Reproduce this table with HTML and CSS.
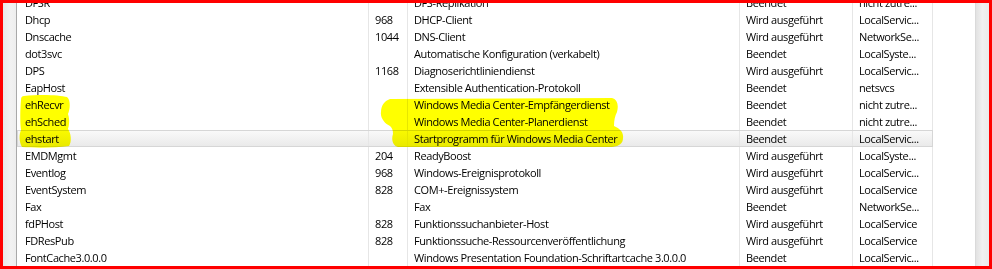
FILE: index.html
```html
<!DOCTYPE html>
<html lang="de">
<head>
<meta charset="utf-8">
<title>Dienste</title>
<link rel="stylesheet" href="styles.css">
</head>
<body>
<div class="frame">
  <div class="window">
    <div class="gutter"></div>
    <div class="list">
      <div class="rows">
        <div class="row"><div class="c name">DFSR</div><div class="c pid"></div><div class="c desc">DFS-Replikation</div><div class="c status">Beendet</div><div class="c group">nicht zutre...</div></div>
        <div class="row"><div class="c name">Dhcp</div><div class="c pid">968</div><div class="c desc">DHCP-Client</div><div class="c status">Wird ausgeführt</div><div class="c group">LocalServic...</div></div>
        <div class="row"><div class="c name">Dnscache</div><div class="c pid">1044</div><div class="c desc">DNS-Client</div><div class="c status">Wird ausgeführt</div><div class="c group">NetworkSe...</div></div>
        <div class="row"><div class="c name">dot3svc</div><div class="c pid"></div><div class="c desc">Automatische Konfiguration (verkabelt)</div><div class="c status">Beendet</div><div class="c group">LocalSyste...</div></div>
        <div class="row"><div class="c name">DPS</div><div class="c pid">1168</div><div class="c desc">Diagnoserichtliniendienst</div><div class="c status">Wird ausgeführt</div><div class="c group">LocalServic...</div></div>
        <div class="row"><div class="c name">EapHost</div><div class="c pid"></div><div class="c desc">Extensible Authentication-Protokoll</div><div class="c status">Beendet</div><div class="c group">netsvcs</div></div>
        <div class="row"><div class="c name">ehRecvr</div><div class="c pid"></div><div class="c desc">Windows Media Center-Empfängerdienst</div><div class="c status">Beendet</div><div class="c group">nicht zutre...</div></div>
        <div class="row"><div class="c name">ehSched</div><div class="c pid"></div><div class="c desc">Windows Media Center-Planerdienst</div><div class="c status">Beendet</div><div class="c group">nicht zutre...</div></div>
        <div class="row selected"><div class="c name">ehstart</div><div class="c pid"></div><div class="c desc">Startprogramm für Windows Media Center</div><div class="c status">Beendet</div><div class="c group">LocalServic...</div></div>
        <div class="row"><div class="c name">EMDMgmt</div><div class="c pid">204</div><div class="c desc">ReadyBoost</div><div class="c status">Wird ausgeführt</div><div class="c group">LocalSyste...</div></div>
        <div class="row"><div class="c name">Eventlog</div><div class="c pid">968</div><div class="c desc">Windows-Ereignisprotokoll</div><div class="c status">Wird ausgeführt</div><div class="c group">LocalServic...</div></div>
        <div class="row"><div class="c name">EventSystem</div><div class="c pid">828</div><div class="c desc">COM+-Ereignissystem</div><div class="c status">Wird ausgeführt</div><div class="c group">LocalService</div></div>
        <div class="row"><div class="c name">Fax</div><div class="c pid"></div><div class="c desc">Fax</div><div class="c status">Beendet</div><div class="c group">NetworkSe...</div></div>
        <div class="row"><div class="c name">fdPHost</div><div class="c pid">828</div><div class="c desc">Funktionssuchanbieter-Host</div><div class="c status">Wird ausgeführt</div><div class="c group">LocalService</div></div>
        <div class="row"><div class="c name">FDResPub</div><div class="c pid">828</div><div class="c desc">Funktionssuche-Ressourcenveröffentlichung</div><div class="c status">Wird ausgeführt</div><div class="c group">LocalService</div></div>
        <div class="row"><div class="c name">FontCache3.0.0.0</div><div class="c pid"></div><div class="c desc">Windows Presentation Foundation-Schriftartcache 3.0.0.0</div><div class="c status">Beendet</div><div class="c group">LocalServic...</div></div>
      </div>
    </div>
    <div class="scrollbar"></div>
  </div>
  <svg class="marker" width="992" height="269" viewBox="0 0 992 269" aria-hidden="true">
    <path d="M24,96 C40,94 60,95 67,97 C71,100 70,110 68,114 C70,120 69,126 68,129 C71,133 72,142 69,146 C55,148 35,148 22,147 C19,142 19,134 21,130 C20,124 20,110 21,100 C21,97 22,96 24,96 Z"/>
    <path d="M390,99 L612,98 C617,99 619,105 617,112 C615,116 614,120 614,126 C618,128 624,131 623,138 C623,143 620,146 612,147 L398,147 C393,146 391,140 393,134 C393,130 392,128 390,126 C385,124 380,118 381,112 C381,106 384,101 390,99 Z"/>
  </svg>
</div>
</body>
</html>
```

FILE: styles.css
```css
html, body {
  margin: 0;
  padding: 0;
  background: #ffffff;
}

.frame {
  position: relative;
  width: 992px;
  height: 269px;
  box-sizing: border-box;
  border-top: 3px solid #ff0000;
  border-left: 3px solid #ff0000;
  border-right: 3px solid #ff0000;
  border-bottom: 3px solid #ff0000;
  overflow: hidden;
}

.window {
  display: flex;
  height: 100%;
  background: #ffffff;
}

.gutter {
  width: 13px;
  flex: none;
  background: linear-gradient(to right, #e8e8e8, #f2f2f2 60%, #eeeeee);
  border-right: 1px solid #a9a9a9;
}

.list {
  flex: 1;
  overflow: hidden;
}

.rows {
  margin-top: -9px;
}

.row {
  display: grid;
  grid-template-columns: 352px 39px 332px 113px 80px;
  width: 916px;
  height: 17px;
  box-sizing: border-box;
  font-family: "Open Sans", "Noto Sans", "Liberation Sans", sans-serif;
  font-size: 11px;
  letter-spacing: -0.4px;
  line-height: 17px;
  color: #000000;
}

.row.selected {
  background: linear-gradient(to bottom, #fafafa, #e9e9e9);
  outline: 1px solid #d6d6d6;
  outline-offset: -1px;
}

.c {
  border-right: 1px solid #e6e6e6;
  white-space: nowrap;
  overflow: hidden;
  padding-left: 6px;
}

.name {
  padding-left: 8px;
}

.scrollbar {
  width: 13px;
  flex: none;
  background: linear-gradient(to right, #e2e2e2, #f1f1f1 50%, #ebebeb);
  border-left: 1px solid #dadada;
}

.marker {
  position: absolute;
  left: -3px;
  top: -3px;
  pointer-events: none;
  mix-blend-mode: multiply;
}

.marker path {
  fill: #ffff00;
}
```
